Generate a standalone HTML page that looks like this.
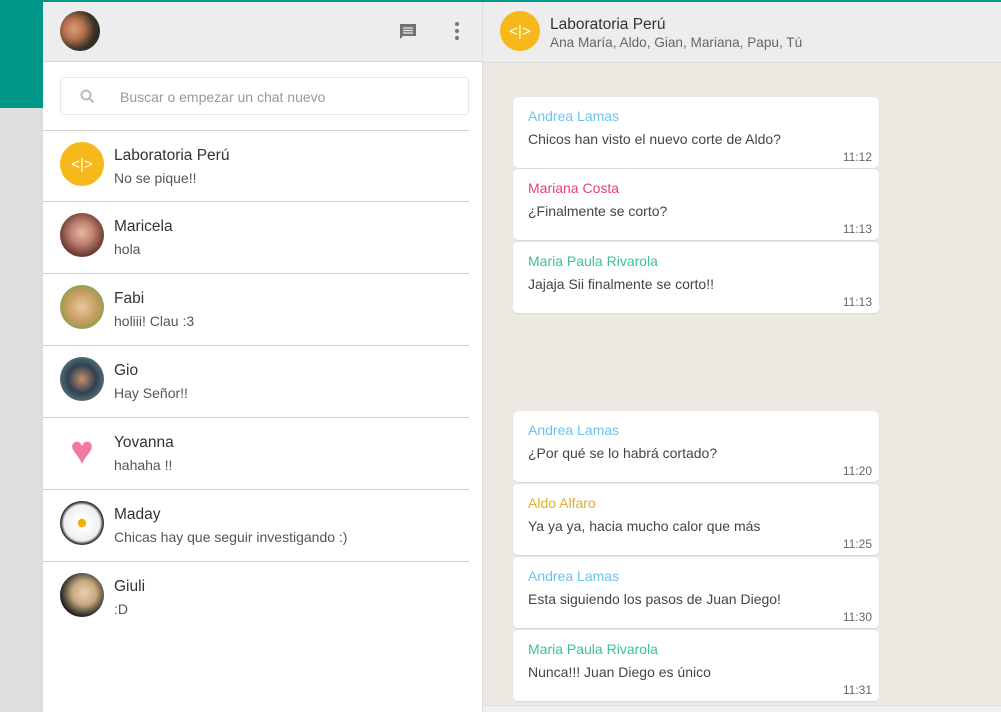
<!DOCTYPE html>
<html><head><meta charset="utf-8"><style>
*{margin:0;padding:0;box-sizing:border-box}
body{width:1001px;height:712px;overflow:hidden;background:#dedede;font-family:"Liberation Sans",sans-serif;position:relative}
.teal{position:absolute;left:0;top:0;width:1001px;height:108px;background:#009688}
.side{position:absolute;left:43px;top:2px;width:440px;height:710px;background:#fff;border-right:1px solid #ddd}
.shead{height:60px;background:#ededed;border-bottom:1px solid #d6d6d6;position:relative}
.av{position:absolute;width:44px;height:44px;border-radius:50%}
.search{position:absolute;left:17px;top:75px;width:409px;height:38px;border:1px solid #e6e6e6;border-radius:4px}
.search span{position:absolute;left:59px;top:11px;font-size:14px;color:#999}
.row{position:absolute;left:0;width:426px;height:72px;border-top:1px solid #cfcfcf}
.row .av{left:17px;top:11px}
.row .n{position:absolute;left:71px;top:16px;font-size:15.5px;color:#333}
.row .m{position:absolute;left:71px;top:39px;font-size:14px;color:#555}
.chat{position:absolute;left:483px;top:2px;width:518px;height:710px;background:#ece8e2}
.chead{height:61px;background:#ededed;border-bottom:1px solid #dcdcdc;position:relative}
.b{position:absolute;left:30px;width:366px;height:71px;background:#fff;border-radius:5px;box-shadow:0 1px 1px rgba(0,0,0,.08)}
.b .n{position:absolute;left:15px;top:11px;font-size:14px}
.b .m{position:absolute;left:15px;top:34px;font-size:14px;color:#444}
.b .t{position:absolute;right:7px;top:53px;font-size:12px;color:#666}
.lab{background:#f6b81b;display:flex;align-items:center;justify-content:center;color:#fff;font-size:15px}
</style></head><body>
<div class="teal"></div>
<div class="side">
 <div class="shead">
  <div class="av" style="left:17px;top:9px;width:40px;height:40px;background:radial-gradient(circle at 35% 45%,#d9a07a 0,#b87050 30%,#3a3326 60%,#1e1a14 100%)"></div>
  <svg style="position:absolute;left:355px;top:20px" width="20" height="20" viewBox="0 0 20 20"><path d="M2 2h16v12H5l-3 3z" fill="#727272"/><path d="M5 6h10M5 8.5h10M5 11h10" stroke="#ededed" stroke-width="1.2"/></svg>
  <svg style="position:absolute;left:410px;top:19px" width="8" height="22"><circle cx="4" cy="3" r="2" fill="#777"/><circle cx="4" cy="10" r="2" fill="#777"/><circle cx="4" cy="17" r="2" fill="#777"/></svg>
 </div>
 <div class="search"><svg style="position:absolute;left:19px;top:11px" width="15" height="15"><circle cx="6" cy="6" r="4.5" stroke="#bbb" stroke-width="2" fill="none"/><path d="M9.5 9.5l4 4" stroke="#bbb" stroke-width="2.2"/></svg><span>Buscar o empezar un chat nuevo</span></div>
 <div class="row" style="top:128px"><div class="av lab">&lt;|&gt;</div><div class="n">Laboratoria Perú</div><div class="m">No se pique!!</div></div>
 <div class="row" style="top:199px"><div class="av" style="background:radial-gradient(circle at 50% 45%,#e8b8a0 0,#c08070 35%,#6a3a30 70%)"></div><div class="n">Maricela</div><div class="m">hola</div></div>
 <div class="row" style="top:271px"><div class="av" style="background:radial-gradient(circle at 50% 50%,#e8c8a0 0,#c8a060 45%,#8a9a50 80%)"></div><div class="n">Fabi</div><div class="m">holiii! Clau :3</div></div>
 <div class="row" style="top:343px"><div class="av" style="background:radial-gradient(circle at 50% 50%,#c89070 0,#304050 45%,#5a7a80 80%)"></div><div class="n">Gio</div><div class="m">Hay Señor!!</div></div>
 <div class="row" style="top:415px"><div class="av" style="background:#fff;color:#f27a9e;font-size:40px;line-height:44px;text-align:center">♥</div><div class="n">Yovanna</div><div class="m">hahaha !!</div></div>
 <div class="row" style="top:487px"><div class="av" style="background:radial-gradient(circle,#f0b000 0,#f0b000 12%,#fff 15%,#eee 58%,#2a3a2a 68%)"></div><div class="n">Maday</div><div class="m">Chicas hay que seguir investigando :)</div></div>
 <div class="row" style="top:559px"><div class="av" style="background:radial-gradient(circle at 55% 45%,#e8d0b0 0,#c8a880 35%,#202020 70%)"></div><div class="n">Giuli</div><div class="m">:D</div></div>
</div>
<div class="chat">
 <div class="chead"><div class="av lab" style="left:17px;top:9px;width:40px;height:40px">&lt;|&gt;</div>
  <div style="position:absolute;left:67px;top:14px;font-size:15.5px;color:#333">Laboratoria Perú</div>
  <div style="position:absolute;left:67px;top:33px;font-size:13.6px;color:#666">Ana María, Aldo, Gian, Mariana, Papu, Tú</div></div>
 <div class="b" style="top:95px"><div class="n" style="color:#6cc3ef">Andrea Lamas</div><div class="m">Chicos han visto el nuevo corte de Aldo?</div><div class="t">11:12</div></div>
 <div class="b" style="top:167px"><div class="n" style="color:#e63d82">Mariana Costa</div><div class="m">¿Finalmente se corto?</div><div class="t">11:13</div></div>
 <div class="b" style="top:240px"><div class="n" style="color:#3cc48e">Maria Paula Rivarola</div><div class="m">Jajaja Sii finalmente se corto!!</div><div class="t">11:13</div></div>
 <div class="b" style="top:409px"><div class="n" style="color:#6cc3ef">Andrea Lamas</div><div class="m">¿Por qué se lo habrá cortado?</div><div class="t">11:20</div></div>
 <div class="b" style="top:482px"><div class="n" style="color:#e3ad2a">Aldo Alfaro</div><div class="m">Ya ya ya, hacia mucho calor que más</div><div class="t">11:25</div></div>
 <div class="b" style="top:555px"><div class="n" style="color:#6cc3ef">Andrea Lamas</div><div class="m">Esta siguiendo los pasos de Juan Diego!</div><div class="t">11:30</div></div>
 <div class="b" style="top:628px"><div class="n" style="color:#3cc48e">Maria Paula Rivarola</div><div class="m">Nunca!!! Juan Diego es único</div><div class="t">11:31</div></div>
 <div style="position:absolute;left:0;top:703px;width:518px;height:7px;background:#f0f0f0;border-top:1px solid #ddd"></div>
</div>
</body></html>
